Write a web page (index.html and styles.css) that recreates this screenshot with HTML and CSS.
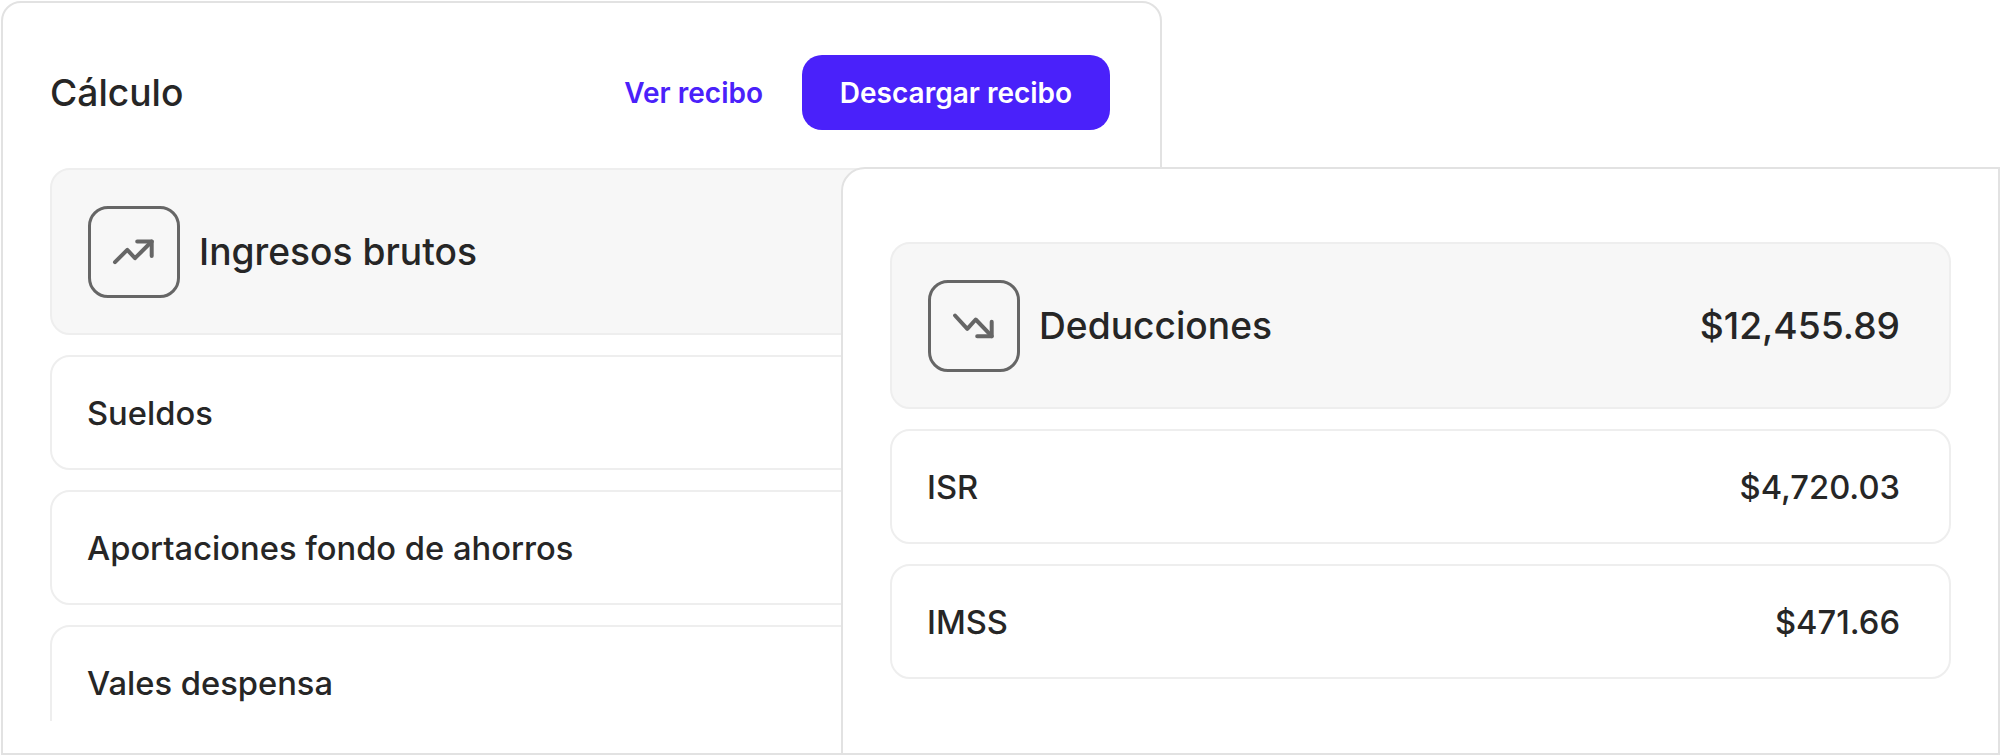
FILE: index.html
```html
<!DOCTYPE html>
<html lang="es">
<head>
    <meta charset="UTF-8">
    <title>Cálculo</title>
    <link rel="stylesheet" href="styles.css">
</head>
<body>
    <div class="page">
        <section class="card">
            <div class="card-header">
                <h1>Cálculo</h1>
                <div class="actions">
                    <a href="#" class="link-button">Ver recibo</a>
                    <button class="primary-button">Descargar recibo</button>
                </div>
            </div>
            <div class="list">
                <div class="summary-row">
                    <div class="summary-title">
                        <span class="icon-box">
                            <svg width="48" height="48" viewBox="0 0 48 48" fill="none" stroke="#666" stroke-width="4" stroke-linecap="round" stroke-linejoin="round">
                                <path d="M5 34.2 17.3 21.8 25 30.2 41.7 13.5"/>
                                <path d="M27.2 13.5H41.7V28"/>
                            </svg>
                        </span>
                        <span>Ingresos brutos</span>
                    </div>
                </div>
                <div class="row"><span>Sueldos</span></div>
                <div class="row"><span>Aportaciones fondo de ahorros</span></div>
                <div class="row"><span>Vales despensa</span></div>
            </div>
        </section>

        <section class="overlay-card">
            <div class="list">
                <div class="summary-row">
                    <div class="summary-title">
                        <span class="icon-box">
                            <svg width="48" height="48" viewBox="0 0 48 48" fill="none" stroke="#666" stroke-width="4" stroke-linecap="round" stroke-linejoin="round">
                                <path d="M5 13.5 17.3 26.8 25.7 17.5 41.7 34.2"/>
                                <path d="M27.2 34.2H41.7V19.7"/>
                            </svg>
                        </span>
                        <span>Deducciones</span>
                    </div>
                    <span class="amount">$12,455.89</span>
                </div>
                <div class="row"><span>ISR</span><span class="amount">$4,720.03</span></div>
                <div class="row"><span>IMSS</span><span class="amount">$471.66</span></div>
            </div>
        </section>
    </div>
</body>
</html>
```

FILE: styles.css
```css
* {
    margin: 0;
    padding: 0;
    box-sizing: border-box;
    font-family: Inter, "Noto Sans", sans-serif;
}

body {
    background: white;
    color: #262626;
}

.page {
    position: relative;
    width: 2000px;
    height: 756px;
    padding: 1px;
    overflow: hidden;
}

.card {
    width: 1161px;
    height: 754px;
    padding: 52px 50px 0 47px;
    background: white;
    border: 2px solid #e2e2e2;
    border-radius: 20px 20px 0 0;
}

.card-header {
    display: flex;
    justify-content: space-between;
    align-items: center;
    height: 75px;
    margin-bottom: 38px;
}

.card-header h1 {
    font-size: 37.2px;
    font-weight: 450;
}

.actions {
    display: flex;
    align-items: center;
    gap: 39px;
}

.link-button {
    color: #4a21fa;
    text-decoration: none;
    font-size: 28px;
    font-weight: 600;
}

.primary-button {
    width: 308px;
    height: 75px;
    background: #4a21fa;
    color: white;
    border: none;
    border-radius: 20px;
    font-size: 28px;
    font-weight: 600;
}

.list {
    display: flex;
    flex-direction: column;
    gap: 20px;
    height: 553px;
    overflow: hidden;
}

.summary-row,
.row {
    display: flex;
    flex-shrink: 0;
    justify-content: space-between;
    align-items: center;
    border: 2px solid #eeeeee;
    border-radius: 20px;
}

.summary-row {
    height: 167px;
    padding: 0 49px 0 36px;
    background: #f7f7f7;
    font-size: 37.2px;
    font-weight: 450;
}

.row {
    height: 115px;
    padding: 0 49px 0 35px;
    font-size: 32.7px;
    font-weight: 450;
}

.summary-title {
    display: flex;
    align-items: center;
    gap: 19px;
}

.icon-box {
    display: flex;
    justify-content: center;
    align-items: center;
    width: 92px;
    height: 92px;
    border: 3px solid #666;
    border-radius: 20px;
}

.overlay-card {
    position: absolute;
    top: 167px;
    left: 841px;
    right: 0;
    bottom: 1px;
    padding: 73px 47px 0 47px;
    background: white;
    border: 2px solid #e2e2e2;
    border-radius: 24px 0 0 0;
}
```
